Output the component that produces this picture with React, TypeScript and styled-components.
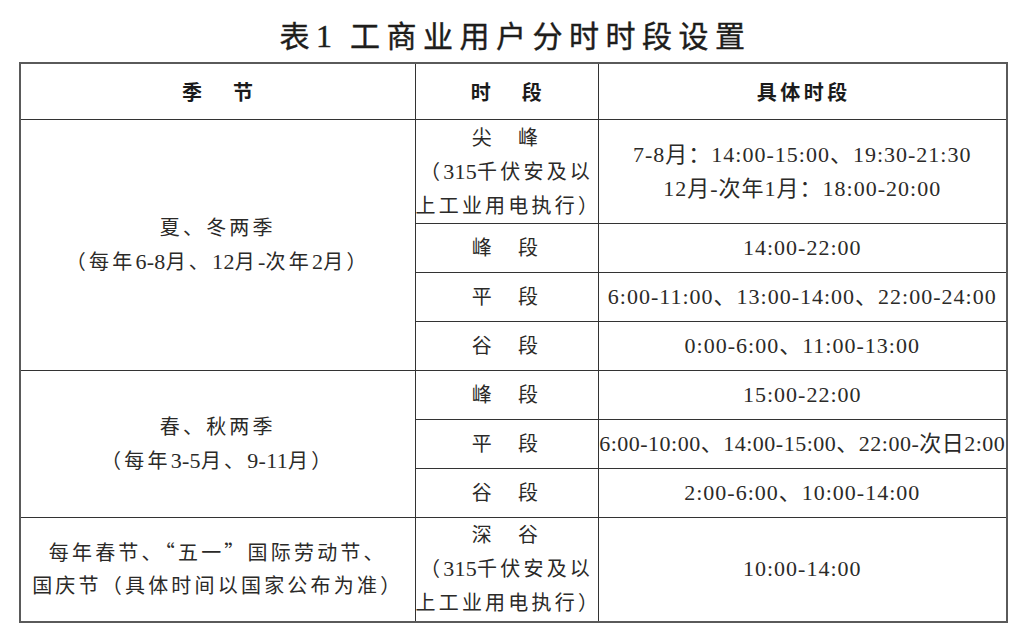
import React from "react";
import styled, { createGlobalStyle } from "styled-components";

const GlobalStyle = createGlobalStyle`
  html, body {
    margin: 0;
    padding: 0;
    background: #ffffff;
  }
  body {
    font-family: "Liberation Serif", "Noto Sans CJK SC", serif;
    color: #2b2a28;
  }
`;

type Period = {
  label: React.ReactNode;
  times: React.ReactNode;
  tight?: boolean;
  tall?: boolean;
};

type Season = {
  name: React.ReactNode;
  periods: Period[];
};

function Num({ children }: { children: React.ReactNode }) {
  return <NumText>{children}</NumText>;
}

function Wide({ children }: { children: React.ReactNode }) {
  return <WideText>{children}</WideText>;
}

const note = (
  <>
    （<Num>315</Num>千伏安及以
    <br />
    上工业用电执行）
  </>
);

const seasons: Season[] = [
  {
    name: (
      <>
        夏、冬两季
        <br />
        （每年<Num>6-8</Num>月、<Num>12</Num>月<Num>-</Num>次年<Num>2</Num>月）
      </>
    ),
    periods: [
      {
        label: (
          <>
            尖　峰
            <br />
            {note}
          </>
        ),
        times: (
          <>
            7-8月：14:00-15:00、19:30-21:30
            <br />
            12月-次年1月：18:00-20:00
          </>
        ),
        tall: true,
      },
      { label: "峰　段", times: "14:00-22:00" },
      { label: "平　段", times: "6:00-11:00、13:00-14:00、22:00-24:00" },
      { label: "谷　段", times: "0:00-6:00、11:00-13:00" },
    ],
  },
  {
    name: (
      <>
        春、秋两季
        <br />
        （每年<Num>3-5</Num>月、<Num>9-11</Num>月）
      </>
    ),
    periods: [
      { label: "峰　段", times: "15:00-22:00" },
      {
        label: "平　段",
        times: "6:00-10:00、14:00-15:00、22:00-次日2:00",
        tight: true,
      },
      { label: "谷　段", times: "2:00-6:00、10:00-14:00" },
    ],
  },
  {
    name: (
      <>
        每年春节、<Wide>“</Wide>五一<Wide>”</Wide>国际劳动节、
        <br />
        国庆节（具体时间以国家公布为准）
      </>
    ),
    periods: [
      {
        label: (
          <>
            深　谷
            <br />
            {note}
          </>
        ),
        times: "10:00-14:00",
        tall: true,
      },
    ],
  },
];

const App = () => {
  return (
    <Page>
      <GlobalStyle />
      <Title>
        表<TitleNum>1</TitleNum> 工商业用户分时时段设置
      </Title>
      <Table>
        <colgroup>
          <col style={{ width: 395 }} />
          <col style={{ width: 183 }} />
          <col style={{ width: 409 }} />
        </colgroup>
        <thead>
          <tr>
            <HeadCell>季　节</HeadCell>
            <HeadCell>时　段</HeadCell>
            <HeadCell $narrow>具体时段</HeadCell>
          </tr>
        </thead>
        <tbody>
          {seasons.map((season, si) =>
            season.periods.map((p, pi) => (
              <Row key={`${si}-${pi}`} $tall={p.tall}>
                {pi === 0 && (
                  <SeasonCell rowSpan={season.periods.length}>
                    {season.name}
                  </SeasonCell>
                )}
                <LabelCell>{p.label}</LabelCell>
                <TimeCell $tight={p.tight}>{p.times}</TimeCell>
              </Row>
            ))
          )}
        </tbody>
      </Table>
    </Page>
  );
};

const Page = styled.div`
  width: 1019px;
  height: 631px;
  padding: 0 13px 0 19px;
  box-sizing: border-box;
  overflow: hidden;
`;

const Title = styled.h1`
  margin: 0;
  height: 62px;
  padding-top: 20px;
  padding-left: 6px;
  box-sizing: border-box;
  text-align: center;
  font-family: "Liberation Serif", "Noto Sans CJK SC", serif;
  font-size: 30px;
  font-weight: 400;
  line-height: 1;
  letter-spacing: 6.5px;
  color: #1e1d1b;
  -webkit-text-stroke: 0.4px #1e1d1b;
`;

const TitleNum = styled.span`
  font-size: 32px;
  letter-spacing: 4px;
`;

const Table = styled.table`
  width: 987px;
  border-collapse: collapse;
  table-layout: fixed;
  border: 2px solid #5a5a5a;

  td,
  th {
    border: 1.5px solid #333333;
    padding: 0;
    text-align: center;
    vertical-align: middle;
  }
`;

const HeadCell = styled.th<{ $narrow?: boolean }>`
  height: 55px;
  font-family: "Noto Sans CJK SC", sans-serif;
  font-size: 20px;
  font-weight: 700;
  letter-spacing: ${(p) => (p.$narrow ? "3.5px" : "5.5px")};
  color: #1b1b1b;
  padding-left: ${(p) => (p.$narrow ? "3px" : "5px")} !important;
`;

const Row = styled.tr<{ $tall?: boolean }>`
  height: ${(p) => (p.$tall ? "104px" : "49px")};
`;

const SeasonCell = styled.td`
  font-size: 20px;
  line-height: 33px;
  letter-spacing: 3.2px;
  white-space: nowrap;
`;

const LabelCell = styled.td`
  font-size: 20px;
  line-height: 34px;
  letter-spacing: 3.2px;
  white-space: nowrap;
`;

const TimeCell = styled.td<{ $tight?: boolean }>`
  font-size: 22px;
  line-height: 34px;
  letter-spacing: ${(p) => (p.$tight ? "0.5px" : "1px")};
  white-space: nowrap;
`;

const NumText = styled.span`
  font-size: 22px;
  letter-spacing: 0.3px;
`;

const WideText = styled.span`
  font-family: "Noto Sans CJK SC", sans-serif;
`;

export default App;
